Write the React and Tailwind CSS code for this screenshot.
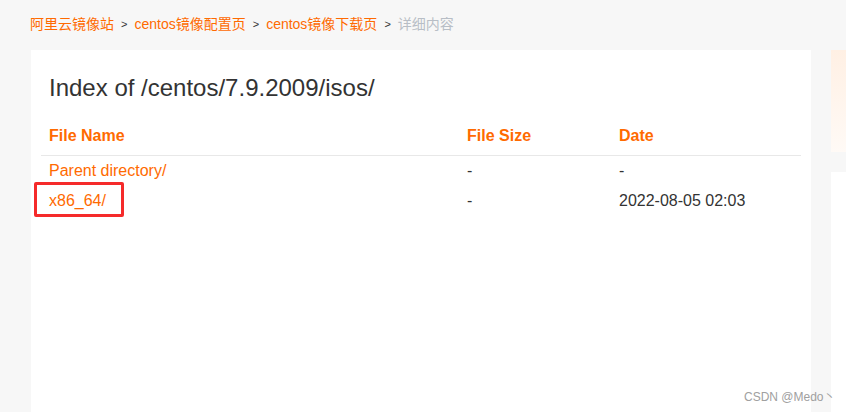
import React from 'react';

const crumbs = ['阿里云镜像站', 'centos镜像配置页', 'centos镜像下载页'];

const rows = [
  { name: 'Parent directory/', size: '-', date: '-' },
  { name: 'x86_64/', size: '-', date: '2022-08-05 02:03' },
];

export default function App() {
  return (
    <div
      className="relative w-[846px] h-[412px] overflow-hidden bg-[#f7f7f7]"
      style={{ fontFamily: '"Liberation Sans", Arial, "Noto Sans CJK SC", sans-serif' }}
    >
      {/* breadcrumb */}
      <div className="flex items-center h-[46px] pl-[30px] text-[14px] pt-[3px]">
        {crumbs.map((c) => (
          <React.Fragment key={c}>
            <span className="text-[#ff6a00]">{c}</span>
            <span className="mx-[7px] text-[11px] text-[#333]">&gt;</span>
          </React.Fragment>
        ))}
        <span className="text-[#b8bec6]">详细内容</span>
      </div>

      <div className="flex mt-[4px] h-[362px]">
        {/* main card */}
        <div className="relative ml-[31px] w-[780px] shrink-0 bg-white">
          <h1 className="pl-[18px] pt-[23px] text-[24px] leading-[30px] text-[#333]">
            Index of /centos/7.9.2009/isos/
          </h1>
          <table className="mt-[12px] ml-[10px] w-[760px] text-[16px] leading-[20px] border-collapse">
            <thead>
              <tr className="h-[40px] border-b border-[#e8e8e8] text-left text-[#ff6a00] font-bold">
                <th className="w-[418px] px-[8px] pt-[2px]">File Name</th>
                <th className="w-[152px] px-[8px] pt-[2px]">File Size</th>
                <th className="px-[8px] pt-[2px]">Date</th>
              </tr>
            </thead>
            <tbody>
              {rows.map((r) => (
                <tr key={r.name} className="h-[30px]">
                  <td className="px-[8px] pt-[2px] text-[#ff6a00]">{r.name}</td>
                  <td className="px-[8px] pt-[2px] text-[#333]">{r.size}</td>
                  <td className="px-[8px] pt-[2px] text-[#333]">{r.date}</td>
                </tr>
              ))}
            </tbody>
          </table>

          {/* annotation box */}
          <div className="absolute left-[3px] top-[132px] w-[90px] h-[35px] border-[3px] border-[#f52a2a] rounded-[2px]" />
        </div>

        {/* right column */}
        <div className="ml-[20px] w-[60px] shrink-0 flex flex-col">
          <div className="h-[102px] bg-gradient-to-b from-[#fff0e4] to-[#fffaf6]" />
          <div className="mt-[20px] flex-1 bg-white" />
        </div>
      </div>

      {/* watermark */}
      <div className="absolute left-[744px] top-[389px] text-[12px] leading-[16px] text-[#a0a0a0] whitespace-nowrap">
        CSDN @Medo丶
      </div>
    </div>
  );
}
